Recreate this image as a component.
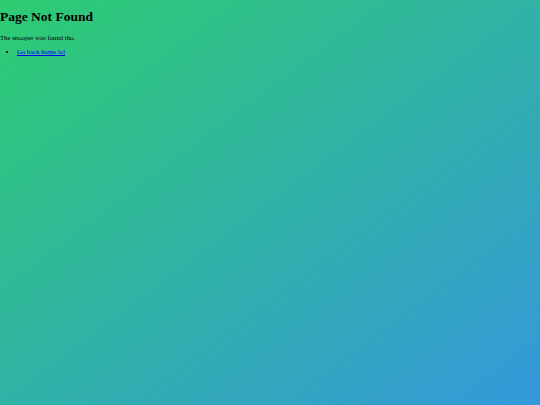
export default function App() {
  return (
    <div
      className="min-h-screen w-full flow-root bg-[linear-gradient(to_bottom_right,#2ecc71,#3498db)] text-black text-[6.75px]"
      style={{ fontFamily: '"Liberation Serif", "Times New Roman", serif' }}
    >
      <h1 className="text-[13.5px] font-bold my-[9.045px] leading-[1.15]">Page Not Found</h1>
      <p className="my-[6.75px] leading-[1.15]">The snooper was found tho.</p>
      <ul className="my-[6.75px] pl-[16.875px] list-disc leading-[1.15]">
        <li>
          <a href="#" className="text-[#0000ee] underline">Go back home lol</a>
        </li>
      </ul>
    </div>
  );
}
